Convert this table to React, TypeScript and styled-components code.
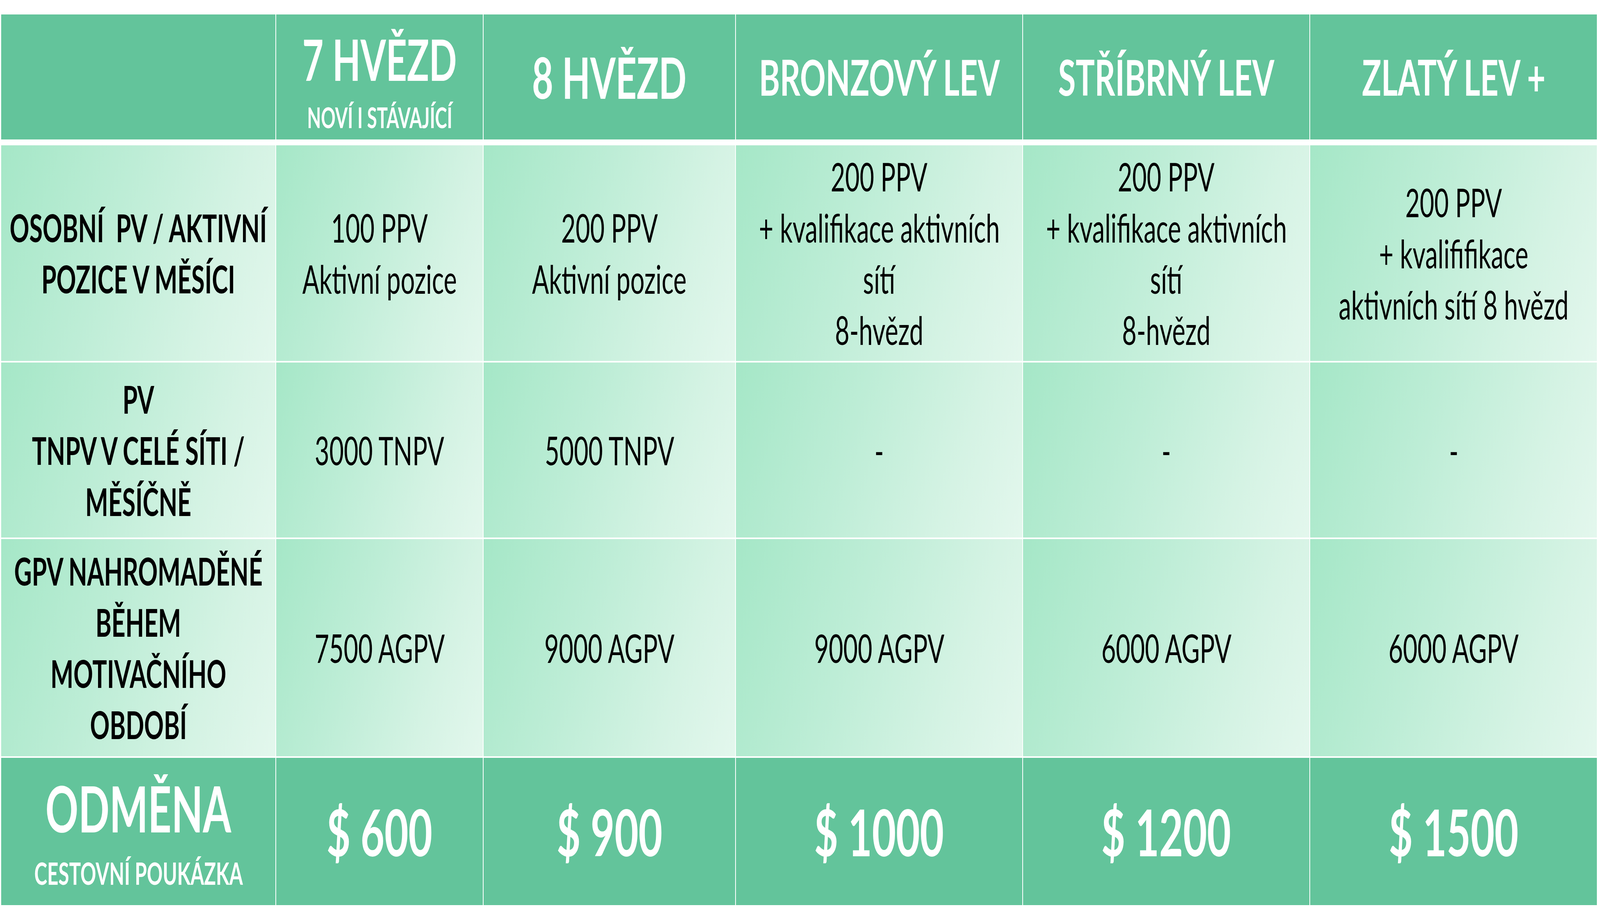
import React, { useEffect, useState } from 'react';
import styled, { createGlobalStyle } from 'styled-components';

// the table is drawn on a 6393px wide design; horizontal measures follow the viewport width
const DESIGN_WIDTH = 6393;
const u = (px: number) => `calc(${px} * 100vw / ${DESIGN_WIDTH})`;

const GlobalStyle = createGlobalStyle`
  html, body {
    margin: 0;
    padding: 0;
    background: #ffffff;
    overflow: hidden;
  }
  body {
    font-family: Lato, 'Open Sans', 'Noto Sans', sans-serif;
  }
`;

const Page = styled.div`
  width: 100%;
  box-sizing: border-box;
  padding: 37px ${u(12)} 0 ${u(5)};
`;

const Table = styled.div`
  display: flex;
  flex-direction: column;
  gap: 4px;
`;

const Row = styled.div<{ $height: number; $spaced?: boolean }>`
  display: grid;
  grid-template-columns: 1096fr 825fr 1006fr 1144fr 1144fr 1146fr;
  column-gap: ${u(3)};
  height: ${(p) => p.$height}px;
  margin-bottom: ${(p) => (p.$spaced ? '11px' : '0')};
`;

const Cell = styled.div<{ $dark?: boolean }>`
  display: flex;
  flex-direction: column;
  align-items: center;
  justify-content: center;
  text-align: center;
  white-space: pre;
  min-width: 0;
  color: ${(p) => (p.$dark ? '#ffffff' : '#000000')};
  background: ${(p) =>
    p.$dark
      ? '#63c49b'
      : 'linear-gradient(108deg, #a5e7c7 0%, #bdedd6 40%, #d5f3e4 75%, #e3f7ed 100%)'};
`;

// text keeps the design's height and follows the viewport horizontally
const Text = styled.div`
  transform: scaleX(var(--sx, 1));
`;

const HeadGroup = styled.div`
  display: flex;
  flex-direction: column;
  align-items: center;
  padding-top: 14px;
`;

const HeadTitle = styled(Text)<{ $size: number }>`
  font-weight: 700;
  font-size: ${(p) => p.$size}px;
  line-height: 1.08;
`;

const HeadSub = styled(Text)`
  font-weight: 700;
  font-size: 72px;
  line-height: 1;
  margin-top: 34px;
`;

const Label = styled(Text)`
  font-weight: 700;
  font-size: 97px;
  line-height: 131px;
`;

const Value = styled(Text)`
  font-weight: 400;
  font-size: 100px;
  line-height: 131px;
`;

const RewardTitle = styled(Text)`
  font-weight: 700;
  font-size: 163px;
  line-height: 1.05;
`;

const RewardSub = styled(Text)`
  font-weight: 700;
  font-size: 78px;
  line-height: 1;
  margin-top: 42px;
`;

const Price = styled(Text)`
  font-weight: 700;
  font-size: 165px;
  line-height: 1;
`;

const Lines: React.FC<{ lines: string[]; as: typeof Label | typeof Value }> = ({
  lines,
  as: Line,
}) => (
  <>
    {lines.map((l, i) => (
      <Line key={i}>{l}</Line>
    ))}
  </>
);

const headers = [
  { title: '8 HVĚZD', size: 146 },
  { title: 'BRONZOVÝ LEV', size: 127 },
  { title: 'STŘÍBRNÝ LEV', size: 127 },
  { title: 'ZLATÝ LEV +', size: 127 },
];

const rows: { height: number; label: string[]; values: string[][] }[] = [
  {
    height: 552,
    label: ['OSOBNÍ  PV / AKTIVNÍ', 'POZICE V MĚSÍCI'],
    values: [
      ['100 PPV', 'Aktivní pozice'],
      ['200 PPV', 'Aktivní pozice'],
      ['200 PPV', '+ kvalifikace aktivních', 'sítí', '8-hvězd'],
      ['200 PPV', '+ kvalifikace aktivních', 'sítí', '8-hvězd'],
      ['200 PPV', '+ kvalififikace', 'aktivních sítí 8 hvězd'],
    ],
  },
  {
    height: 448,
    label: ['PV', 'TNPV V CELÉ SÍTI /', 'MĚSÍČNĚ'],
    values: [['3000 TNPV'], ['5000 TNPV'], ['-'], ['-'], ['-']],
  },
  {
    height: 556,
    label: ['GPV NAHROMADĚNÉ', 'BĚHEM', 'MOTIVAČNÍHO', 'OBDOBÍ'],
    values: [['7500 AGPV'], ['9000 AGPV'], ['9000 AGPV'], ['6000 AGPV'], ['6000 AGPV']],
  },
];

const prices = ['$ 600', '$ 900', '$ 1000', '$ 1200', '$ 1500'];

const widthRatio = () => Math.min(1, document.documentElement.clientWidth / DESIGN_WIDTH);

const App: React.FC = () => {
  const [sx, setSx] = useState(widthRatio);

  useEffect(() => {
    const onResize = () => setSx(widthRatio());
    window.addEventListener('resize', onResize);
    return () => window.removeEventListener('resize', onResize);
  }, []);

  return (
    <>
      <GlobalStyle />
      <Page style={{ '--sx': sx } as React.CSSProperties}>
        <Table>
          <Row $height={320} $spaced>
            <Cell $dark />
            <Cell $dark>
              <HeadGroup>
                <HeadTitle $size={146}>7 HVĚZD</HeadTitle>
                <HeadSub>NOVÍ I STÁVAJÍCÍ</HeadSub>
              </HeadGroup>
            </Cell>
            {headers.map((h) => (
              <Cell $dark key={h.title}>
                <HeadTitle $size={h.size}>{h.title}</HeadTitle>
              </Cell>
            ))}
          </Row>
          {rows.map((row) => (
            <Row $height={row.height} key={row.label[0]}>
              <Cell>
                <Lines lines={row.label} as={Label} />
              </Cell>
              {row.values.map((v, i) => (
                <Cell key={i}>
                  <Lines lines={v} as={Value} />
                </Cell>
              ))}
            </Row>
          ))}
          <Row $height={377}>
            <Cell $dark>
              <RewardTitle>ODMĚNA</RewardTitle>
              <RewardSub>CESTOVNÍ POUKÁZKA</RewardSub>
            </Cell>
            {prices.map((p) => (
              <Cell $dark key={p}>
                <Price>{p}</Price>
              </Cell>
            ))}
          </Row>
        </Table>
      </Page>
    </>
  );
};

export default App;
